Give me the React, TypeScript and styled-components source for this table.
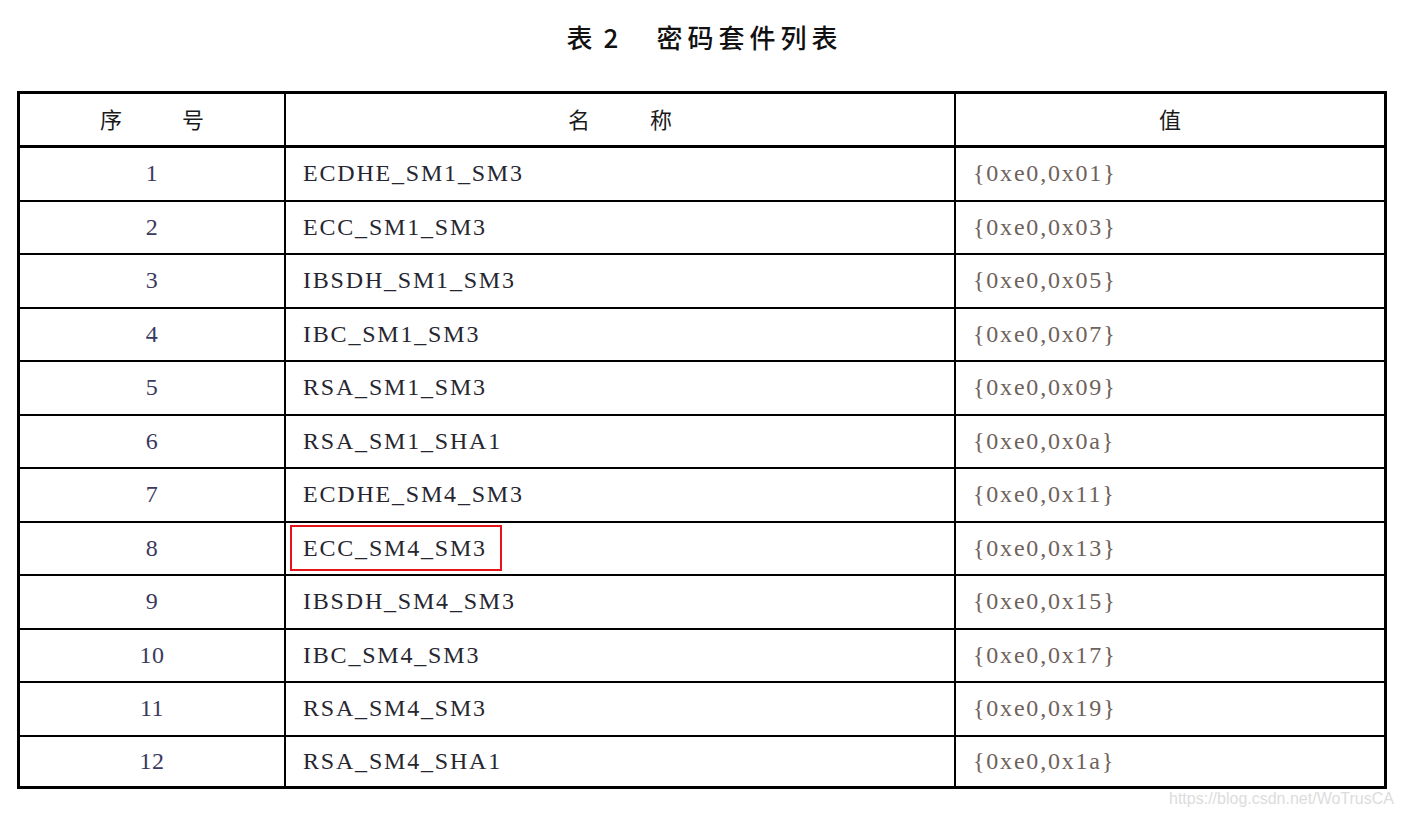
import styled, { createGlobalStyle } from "styled-components";

const GlobalStyle = createGlobalStyle`
  * {
    box-sizing: border-box;
  }
  body {
    margin: 0;
    background: #fff;
  }
`;

const Page = styled.div`
  position: relative;
  width: 1404px;
  height: 816px;
  padding-top: 24px;
  background: #fff;
  overflow: hidden;
`;

const Title = styled.h1`
  margin: 0 0 41px;
  height: 26px;
  display: flex;
  justify-content: center;
  align-items: center;
  font-family: "Noto Sans CJK SC", sans-serif;
  font-size: 26px;
  line-height: 26px;
  font-weight: 500;
  color: #111;
`;

const TitleNo = styled.span`
  display: flex;
  gap: 11px;
  margin-right: 38px;
`;

const TitleText = styled.span`
  letter-spacing: 5px;
  margin-right: -5px;
`;

const Table = styled.div`
  width: 1370px;
  margin-left: 17px;
  border: 3px solid #000;
`;

const Row = styled.div<{ $head?: boolean }>`
  display: grid;
  grid-template-columns: 264px 670px 430px;
  height: ${(p) => (p.$head ? "54px" : "53.5px")};
  border-bottom: ${(p) => (p.$head ? "3px" : "2px")} solid #000;

  &:last-child {
    height: 49.5px;
    border-bottom: none;
  }
`;

const Cell = styled.div<{ $align?: "center" | "left"; $first?: boolean }>`
  position: relative;
  display: flex;
  align-items: center;
  justify-content: ${(p) => (p.$align === "center" ? "center" : "flex-start")};
  padding-left: ${(p) => (p.$align === "center" ? "0" : "17px")};
  border-left: ${(p) => (p.$first ? "none" : "2px solid #000")};
`;

const HeadLabel = styled.span`
  display: flex;
  gap: 60px;
  padding-bottom: 4px;
  font-family: "Noto Sans CJK SC", sans-serif;
  font-size: 22px;
  font-weight: 400;
  color: #1a1a1a;
`;

const Num = styled.span`
  font-family: "Liberation Serif", serif;
  font-size: 24px;
  letter-spacing: 0.5px;
  color: #3a3a5e;
`;

const Name = styled.span`
  font-family: "Liberation Serif", serif;
  font-size: 24px;
  letter-spacing: 1.8px;
  color: #262630;
`;

const Value = styled.span`
  font-family: "Liberation Serif", serif;
  font-size: 24px;
  letter-spacing: 1.8px;
  color: #6e625c;
`;

const Mark = styled.div`
  position: absolute;
  left: 4px;
  top: 2px;
  width: 212px;
  height: 46px;
  border: 2px solid #e8141b;
  pointer-events: none;
`;

const Watermark = styled.div`
  position: absolute;
  right: 10px;
  bottom: 8px;
  font-family: "Liberation Sans", Arial, sans-serif;
  font-size: 16px;
  color: #dcdcdc;
`;

const suites = [
  ["ECDHE_SM1_SM3", "0x01"],
  ["ECC_SM1_SM3", "0x03"],
  ["IBSDH_SM1_SM3", "0x05"],
  ["IBC_SM1_SM3", "0x07"],
  ["RSA_SM1_SM3", "0x09"],
  ["RSA_SM1_SHA1", "0x0a"],
  ["ECDHE_SM4_SM3", "0x11"],
  ["ECC_SM4_SM3", "0x13"],
  ["IBSDH_SM4_SM3", "0x15"],
  ["IBC_SM4_SM3", "0x17"],
  ["RSA_SM4_SM3", "0x19"],
  ["RSA_SM4_SHA1", "0x1a"],
];

export default function App() {
  return (
    <Page>
      <GlobalStyle />
      <Title>
        <TitleNo>
          <span>表</span>
          <span>2</span>
        </TitleNo>
        <TitleText>密码套件列表</TitleText>
      </Title>
      <Table>
        <Row $head>
          <Cell $align="center" $first>
            <HeadLabel>
              <span>序</span>
              <span>号</span>
            </HeadLabel>
          </Cell>
          <Cell $align="center">
            <HeadLabel>
              <span>名</span>
              <span>称</span>
            </HeadLabel>
          </Cell>
          <Cell $align="center">
            <HeadLabel>值</HeadLabel>
          </Cell>
        </Row>
        {suites.map(([name, code], i) => (
          <Row key={name}>
            <Cell $align="center" $first>
              <Num>{i + 1}</Num>
            </Cell>
            <Cell>
              <Name>{name}</Name>
              {i === 7 && <Mark />}
            </Cell>
            <Cell>
              <Value>{`{0xe0,${code}}`}</Value>
            </Cell>
          </Row>
        ))}
      </Table>
      <Watermark>https://blog.csdn.net/WoTrusCA</Watermark>
    </Page>
  );
}
